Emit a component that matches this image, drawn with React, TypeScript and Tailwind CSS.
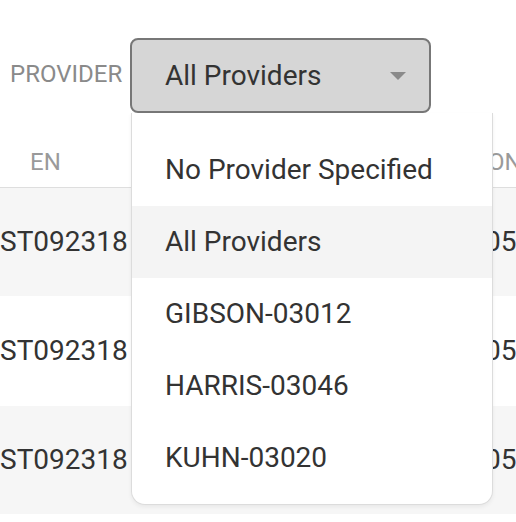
import React from "react";

const rows = [
  { id: "ST092318", v: "0512", bg: "bg-[#f6f6f6]", h: "h-[108px]" },
  { id: "ST092318", v: "0512", bg: "bg-white", h: "h-[110px]" },
  { id: "ST092318", v: "0512", bg: "bg-[#f6f6f6]", h: "h-[108px]" },
];

const items = [
  "No Provider Specified",
  "All Providers",
  "GIBSON-03012",
  "HARRIS-03046",
  "KUHN-03020",
];

export default function App() {
  return (
    <div className="relative w-[516px] h-[522px] overflow-hidden bg-white font-['Roboto',sans-serif] text-[#333]">
      {/* toolbar */}
      <div className="h-[137px] flex items-start pt-[38px]">
        <div className="w-[130px] h-[75px] flex items-center pl-[10px] text-[24px] text-[#8a8a8a] leading-none">
          <span className="-mt-[4px]">PROVIDER</span>
        </div>
        <div className="relative z-10">
          <div className="w-[301px] h-[75px] rounded-[8px] border-2 border-[#777] bg-[#d6d6d6] flex items-center justify-between pl-[33px] pr-[23px]">
            <span className="text-[28px] leading-none">All Providers</span>
            <svg width="16" height="8" viewBox="0 0 16 8">
              <polygon points="0,0 16,0 8,8" fill="#8a8a8a" />
            </svg>
          </div>
          <div className="absolute left-[1px] top-full w-[362px] bg-white border-x border-b border-[#dcdcdc] rounded-b-[14px] pt-[21px] pb-[10px] shadow-[0_2px_4px_rgba(0,0,0,0.06)]">
            {items.map((it, i) => (
              <div
                key={it}
                className={`h-[72px] flex items-center pl-[33px] text-[28px] leading-none ${
                  i === 1 ? "bg-[#f4f4f4]" : ""
                }`}
              >
                {it}
              </div>
            ))}
          </div>
        </div>
      </div>
      {/* table */}
      <div className="h-[51px] border-b border-[#dedede] grid grid-cols-[485px_1fr] items-center text-[24px] text-[#9a9a9a] leading-none">
        <div className="pl-[30px]">EN</div>
        <div className="pl-[3px] whitespace-nowrap">ON</div>
      </div>
      {rows.map((r, i) => (
        <div key={i} className={`${r.h} ${r.bg} grid grid-cols-[485px_1fr] items-center text-[28px] leading-none`}>
          <div>{r.id}</div>
          <div className="whitespace-nowrap">{r.v}</div>
        </div>
      ))}
    </div>
  );
}
